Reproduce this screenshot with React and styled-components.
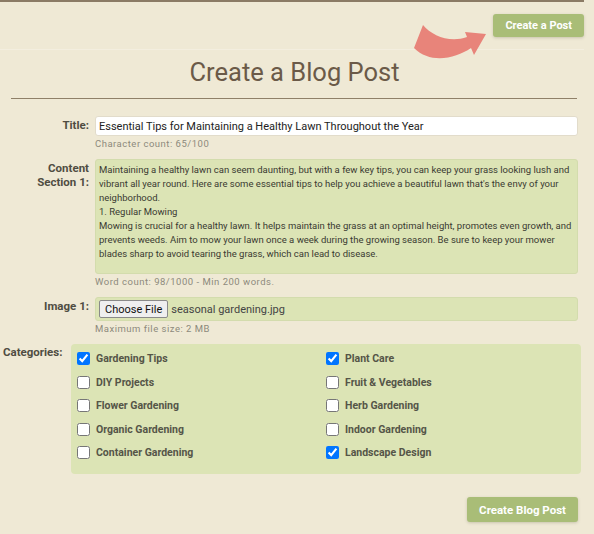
import React from "react";
import styled, { createGlobalStyle } from "styled-components";

const GlobalStyle = createGlobalStyle`
  body {
    margin: 0;
    background: #efe9d5;
    font-family: Roboto, "Liberation Sans", sans-serif;
  }
`;

const content = `Maintaining a healthy lawn can seem daunting, but with a few key tips, you can keep your grass looking lush and vibrant all year round. Here are some essential tips to help you achieve a beautiful lawn that's the envy of your neighborhood.
1. Regular Mowing
Mowing is crucial for a healthy lawn. It helps maintain the grass at an optimal height, promotes even growth, and prevents weeds. Aim to mow your lawn once a week during the growing season. Be sure to keep your mower blades sharp to avoid tearing the grass, which can lead to disease.`;

const categories = [
  ["Gardening Tips", true],
  ["Plant Care", true],
  ["DIY Projects", false],
  ["Fruit & Vegetables", false],
  ["Flower Gardening", false],
  ["Herb Gardening", false],
  ["Organic Gardening", false],
  ["Indoor Gardening", false],
  ["Container Gardening", false],
  ["Landscape Design", true],
];

function App() {
  return (
    <Page>
      <GlobalStyle />
      <Header>
        <Arrow viewBox="0 0 80 46" width="80" height="46">
          <path
            d="M13,7 C22,18 40,25 57,19 L55,14 L76,16 L64,37 L61,30 C45,41 20,46 4,30 Z"
            fill="#e8847a"
          />
        </Arrow>
        <Button $small>Create a Post</Button>
      </Header>
      <Heading>Create a Blog Post</Heading>
      <Rule />
      <Form>
        <Row>
          <Label>Title:</Label>
          <Field>
            <TextInput
              readOnly
              value="Essential Tips for Maintaining a Healthy Lawn Throughout the Year"
            />
            <Hint>Character count: 65/100</Hint>
          </Field>
        </Row>
        <Row>
          <Label>
            Content
            <br />
            Section 1:
          </Label>
          <Field>
            <TextArea readOnly value={content} />
            <Hint>Word count: 98/1000 - Min 200 words.</Hint>
          </Field>
        </Row>
        <Row>
          <Label>Image 1:</Label>
          <Field>
            <FileBox>
              <FileButton>Choose File</FileButton>
              <span>seasonal gardening.jpg</span>
            </FileBox>
            <Hint>Maximum file size: 2 MB</Hint>
          </Field>
        </Row>
        <CategoryRow>
          <CategoryLabel>Categories:</CategoryLabel>
          <CategoryBox>
            {categories.map(([name, checked]) => (
              <Check key={name}>
                <input type="checkbox" defaultChecked={checked} />
                {name}
              </Check>
            ))}
          </CategoryBox>
        </CategoryRow>
        <Footer>
          <Button>Create Blog Post</Button>
        </Footer>
      </Form>
    </Page>
  );
}

const Page = styled.div`
  width: 594px;
  height: 534px;
  overflow: hidden;
`;

const Header = styled.div`
  position: relative;
  width: 584px;
  height: 35px;
  border-top: 2px solid #8b7b65;
  padding-top: 12px;
  display: flex;
  justify-content: flex-end;
  border-bottom: 1px solid #f3eedf;
`;

const Arrow = styled.svg`
  position: absolute;
  left: 410px;
  top: 16px;
`;

const Button = styled.button`
  border: none;
  border-radius: 3px;
  background: #a9bd77;
  color: #fff;
  font-family: Roboto, "Liberation Sans", sans-serif;
  font-weight: 700;
  font-size: ${(p) => (p.$small ? "11px" : "11.5px")};
  height: ${(p) => (p.$small ? "23px" : "25px")};
  padding: 0 12px;
  box-shadow: 0 1px 3px rgba(90, 90, 60, 0.25);
`;

const Heading = styled.h1`
  margin: 7px 0 0;
  padding-right: 5px;
  text-align: center;
  font-size: 25.5px;
  line-height: 30px;
  font-weight: 400;
  color: #6b5a48;
`;

const Rule = styled.div`
  margin: 11px 17px 0 11px;
  border-top: 1px solid #8f8068;
`;

const Form = styled.div`
  padding-top: 17px;
`;

const Row = styled.div`
  display: grid;
  grid-template-columns: 89px 483px;
  column-gap: 6px;
  margin-bottom: 9px;
`;

const Label = styled.div`
  text-align: right;
  font-weight: 700;
  font-size: 11.5px;
  line-height: 14px;
  color: #4f4d42;
  padding-top: 2px;
`;

const Field = styled.div`
  display: flex;
  flex-direction: column;
`;

const TextInput = styled.input`
  box-sizing: border-box;
  height: 20px;
  border: 1px solid #e2dccb;
  border-radius: 3px;
  background: #fff;
  padding: 0 3px;
  font-family: Roboto, "Liberation Sans", sans-serif;
  font-size: 11px;
  color: #222;
  outline: none;
`;

const TextArea = styled.textarea`
  box-sizing: border-box;
  height: 115px;
  border: 1px solid #d3dcad;
  border-radius: 3px;
  background: #dce4b5;
  padding: 3px 3px;
  font-family: Roboto, "Liberation Sans", sans-serif;
  font-size: 9.5px;
  line-height: 14px;
  color: #3a3a32;
  resize: none;
  outline: none;
  overflow: hidden;
`;

const Hint = styled.div`
  font-size: 9.5px;
  line-height: 12px;
  margin-top: 2px;
  color: #8d8a7c;
  letter-spacing: 0.5px;
`;

const FileBox = styled.div`
  box-sizing: border-box;
  height: 24px;
  border: 1px solid #d3dcad;
  border-radius: 3px;
  background: #dce4b5;
  display: flex;
  align-items: center;
  gap: 3px;
  padding-left: 3px;
  font-size: 11px;
  color: #444;
`;

const FileButton = styled.span`
  box-sizing: border-box;
  height: 18px;
  display: flex;
  align-items: center;
  padding: 0 5px;
  border: 1px solid #8a8a8a;
  border-radius: 2px;
  background: #efefef;
  color: #111;
  font-size: 11px;
`;

const CategoryRow = styled.div`
  display: flex;
  align-items: flex-start;
  gap: 6px;
  padding-left: 3px;
  margin-top: 9px;
`;

const CategoryLabel = styled.div`
  font-weight: 700;
  font-size: 11.5px;
  line-height: 14px;
  color: #4f4d42;
  width: 62px;
  padding-top: 1px;
`;

const CategoryBox = styled.div`
  box-sizing: border-box;
  width: 510px;
  height: 130px;
  border-radius: 4px;
  background: #dce4b5;
  padding: 3px 6px 0 6px;
  display: grid;
  grid-template-columns: 249px 1fr;
  grid-auto-rows: 23.5px;
`;

const Check = styled.label`
  display: flex;
  align-items: center;
  gap: 6px;
  font-weight: 700;
  font-size: 10.5px;
  color: #555548;

  input {
    margin: 0;
    width: 13px;
    height: 13px;
  }
`;

const Footer = styled.div`
  display: flex;
  justify-content: flex-end;
  width: 578px;
  margin-top: 23px;
`;

export default App;
